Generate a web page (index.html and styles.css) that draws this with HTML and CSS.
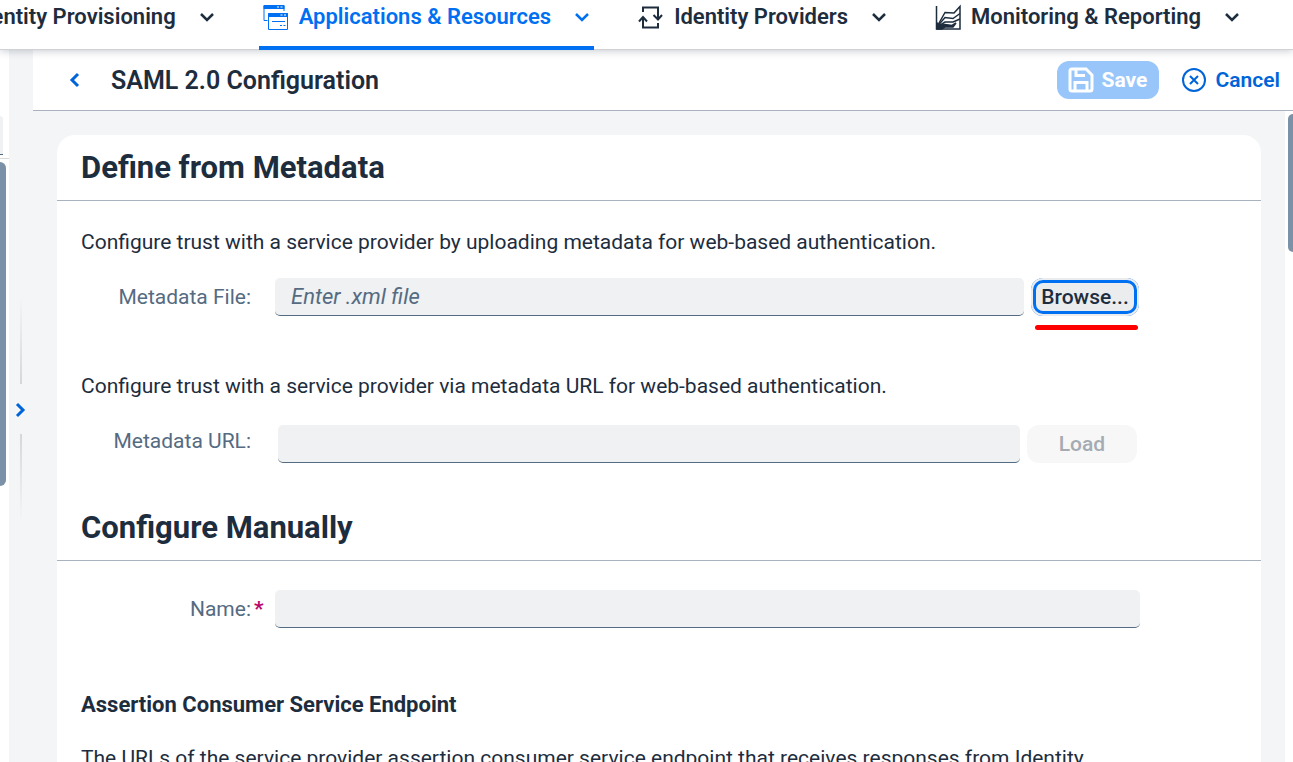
FILE: index.html
```html
<!DOCTYPE html>
<html lang="en">
<head>
<meta charset="utf-8">
<title>SAML 2.0 Configuration</title>
<link rel="stylesheet" href="styles.css">
</head>
<body>
<nav class="topnav">
  <a class="tab" href="#provisioning">
    <span>Identity Provisioning</span>
    <svg class="chevron" viewBox="0 0 16 16"><path d="M2 5l6 6 6-6"/></svg>
  </a>
  <a class="tab tab-active" href="#applications">
    <svg class="tab-icon tab-icon-thin" viewBox="0 0 26 26"><path d="M1 1.500h20v3H1zM1 4v12.500h3.500M21 4v3M5.500 9.500h19v3h-19zM5.500 12v13.500h19V12M9 17.500h13"/><path d="M1 1.500h20v3H1zM5.500 9.500h19v3h-19z" fill="currentColor"/><path class="dots" d="M14 3h2M17.500 3h2M17.500 11h2M21 11h2"/><path d="M17 21.500h2M20.500 21.500h2"/></svg>
    <span>Applications &amp; Resources</span>
    <svg class="chevron" viewBox="0 0 16 16"><path d="M2 5l6 6 6-6"/></svg>
  </a>
  <a class="tab" href="#providers">
    <svg class="tab-icon tab-icon-bold" viewBox="0 0 26 26"><path d="M5 8V3.500h15v11M15.500 11l4.500 4.500 4-4.500M20 19v4.500H5v-10M1 17.500L5 13l4 4.500"/></svg>
    <span>Identity Providers</span>
    <svg class="chevron" viewBox="0 0 16 16"><path d="M2 5l6 6 6-6"/></svg>
  </a>
  <a class="tab" href="#monitoring">
    <svg class="tab-icon" viewBox="0 0 26 26"><path d="M1.500 2v23H25V2.500l-6 6.500-9-.5L3.500 20"/><path d="M3 21.500l7-8 8 1 7-5M3 22.500l7-4.500 8 0 7-3"/><path d="M2 19l2 2.500 6-1 7 1 4-2.500-3 4-8 0-3 2H2z" fill="currentColor"/></svg>
    <span>Monitoring &amp; Reporting</span>
    <svg class="chevron" viewBox="0 0 16 16"><path d="M2 5l6 6 6-6"/></svg>
  </a>
</nav>

<div class="workspace">
  <aside class="list-pane">
    <div class="list-search"></div>
    <div class="list-thumb"></div>
  </aside>
  <div class="splitter">
    <span class="splitter-line"></span>
    <button class="splitter-button" type="button" aria-label="Expand list"><svg class="arrow" viewBox="0 0 16 16"><path d="M4 2l6 6-6 6"/></svg></button>
    <span class="splitter-line splitter-line-end"></span>
  </div>
  <main class="detail">
    <header class="detail-header">
      <button class="back" type="button" aria-label="Back"><svg class="arrow" viewBox="0 0 16 16"><path d="M12 2L6 8l6 6"/></svg></button>
      <h1 class="title">SAML 2.0 Configuration</h1>
      <button class="button save" type="button" disabled>
        <svg class="action-icon" viewBox="0 0 26 26"><path d="M4 2h14l6 6v14a2 2 0 0 1-2 2H4a2 2 0 0 1-2-2V4a2 2 0 0 1 2-2zM8 2v6.500h9M7 24v-8.500h12V24"/></svg>
        <span>Save</span>
      </button>
      <button class="button cancel" type="button">
        <svg class="action-icon" viewBox="0 0 26 26"><circle cx="13" cy="13" r="11"/><path d="M9 9l8 8M17 9l-8 8"/></svg>
        <span>Cancel</span>
      </button>
    </header>
    <div class="detail-body">
      <div class="scroll-area">
        <form class="card">
          <h2 class="section-title">Define from Metadata</h2>
          <section class="section">
            <p class="text">Configure trust with a service provider by uploading metadata for web-based authentication.</p>
            <div class="row">
              <label class="label" for="file">Metadata File:</label>
              <input class="field" id="file" type="text" placeholder="Enter .xml file">
              <span class="browse-wrap"><button class="button browse" type="button">Browse...</button></span>
            </div>
            <p class="text">Configure trust with a service provider via metadata URL for web-based authentication.</p>
            <div class="row row-url">
              <label class="label" for="url">Metadata URL:</label>
              <input class="field" id="url" type="text">
              <button class="button load" type="button" disabled>Load</button>
            </div>
          </section>
          <h2 class="section-title">Configure Manually</h2>
          <section class="section section-manual">
            <div class="row">
              <label class="label label-required" for="name">Name:</label>
              <input class="field" id="name" type="text" required>
            </div>
            <h3 class="subtitle">Assertion Consumer Service Endpoint</h3>
            <p class="text">The URLs of the service provider assertion consumer service endpoint that receives responses from Identity</p>
          </section>
        </form>
      </div>
      <div class="scrollbar"><div class="scroll-thumb"></div></div>
    </div>
  </main>
</div>
</body>
</html>
```
FILE: styles.css
```css
* {
  box-sizing: border-box;
}

body {
  margin: 0;
  height: 100vh;
  overflow: hidden;
  display: flex;
  flex-direction: column;
  background: #f4f5f7;
  color: #1d2d3e;
  font: 21px/30px Roboto, sans-serif;
}

h1, h2, h3, p {
  margin: 0;
}

button, input {
  font: inherit;
  border: 0;
  padding: 0;
}

svg {
  display: block;
  flex: none;
  fill: none;
  stroke: currentColor;
}

/* Top navigation */
.topnav {
  position: relative;
  z-index: 1;
  flex: none;
  display: flex;
  justify-content: flex-end;
  gap: 40px;
  height: 50px;
  padding-right: 49px;
  background: #fff;
  border-bottom: 1px solid #d0d2d5;
  box-shadow: 0 1px 8px rgba(29, 45, 62, 0.25);
  white-space: nowrap;
}

.tab {
  flex: none;
  display: flex;
  align-items: center;
  height: 50px;
  padding: 0 4px 12px;
  border-bottom: 4px solid transparent;
  color: #1d2d3e;
  font-size: 22px;
  font-weight: 600;
  text-decoration: none;
}

.tab-active {
  color: #0070f2;
  border-color: #0070f2;
  border-radius: 3px 3px 0 0;
}

.tab-icon {
  width: 26px;
  height: 26px;
  margin-right: 10px;
  stroke-width: 1.5;
}

.tab-icon-bold {
  stroke-width: 2;
}

.tab-icon-thin {
  stroke-width: 1;
}

.dots {
  stroke: #fff;
}

.chevron {
  width: 16px;
  height: 16px;
  margin-left: 23px;
  stroke-width: 2.5;
}

.arrow {
  width: 16px;
  height: 16px;
  stroke-width: 3;
}

/* Collapsed list and splitter */
.workspace {
  flex: 1;
  min-height: 0;
  display: flex;
}

.list-pane {
  flex: none;
  width: 9px;
  background: #fff;
}

.list-search {
  height: 109px;
  padding-top: 66px;
  border-bottom: 1px solid #d9d9d9;
}

.list-search::before {
  content: "";
  display: block;
  width: 3px;
  height: 38px;
  background: #eff1f2;
  border-bottom: 1px solid #556b82;
  border-radius: 0 4px 0 0;
}

.list-thumb {
  width: 6px;
  height: 324px;
  margin-top: 3px;
  background: #7b91a8;
  border-radius: 0 6px 6px 0;
}

.splitter {
  flex: none;
  width: 24px;
  display: flex;
  flex-direction: column;
  align-items: center;
  padding-top: 246px;
}

.splitter-line {
  width: 2px;
  height: 88px;
  background: linear-gradient(transparent, #d5d7da);
}

.splitter-line-end {
  background: linear-gradient(#d5d7da, transparent);
}

.splitter-button, .back {
  display: flex;
  align-items: center;
  justify-content: center;
  background: none;
  color: #0064d9;
}

.splitter-button {
  width: 24px;
  height: 50px;
  padding-top: 2px;
}

/* Detail page */
.detail {
  flex: 1;
  min-width: 0;
  display: flex;
  flex-direction: column;
}

.detail-header {
  flex: none;
  display: flex;
  align-items: center;
  height: 61px;
  padding: 0 13px 0 24px;
  background: #fff;
  border-bottom: 1px solid #a8b3bf;
}

.back {
  width: 34px;
  height: 38px;
}

.title {
  flex: 1;
  padding: 2px 0 0 20px;
  font-size: 25px;
  font-weight: 600;
}

.button {
  flex: none;
  display: flex;
  align-items: center;
  justify-content: center;
  height: 38px;
  border-radius: 12px;
  font-weight: 500;
  white-space: nowrap;
}

.action-icon {
  width: 26px;
  height: 26px;
  margin-right: 9px;
  stroke-width: 2;
}

.save {
  width: 102px;
  margin-right: 22px;
  background: #99c6fa;
  color: #fff;
  font-weight: 700;
}

.save .action-icon {
  margin-right: 8px;
  stroke-width: 3;
}

.cancel {
  background: none;
  color: #0064d9;
  font-weight: 600;
}

.detail-body {
  flex: 1;
  min-height: 0;
  display: flex;
}

.scroll-area {
  flex: 1;
  min-width: 0;
  padding: 24px 24px 0;
  overflow: hidden;
}

.scrollbar {
  flex: none;
  width: 8px;
  padding: 3px 0 0 3px;
  background: #fff;
}

.scroll-thumb {
  height: 138px;
  background: #7b91a8;
  border-radius: 6px 0 0 6px;
}

/* Form card */
.card {
  background: #fff;
  border-radius: 18px 18px 0 0;
}

.section-title {
  height: 66px;
  padding-left: 24px;
  border-bottom: 1px solid #a8b3bf;
  font-size: 31px;
  font-weight: 700;
  line-height: 66px;
}

.section {
  height: 294px;
  padding: 26px 24px 0;
}

.row {
  display: grid;
  grid-template-columns: 170px minmax(0, 1fr) auto;
  column-gap: 24px;
  height: 38px;
  margin: 21px 97px 55px 0;
}

.row-url {
  column-gap: 27px;
  margin-top: 24px;
  margin-right: 100px;
}

.label {
  height: 38px;
  color: #556b82;
  line-height: 38px;
  text-align: right;
  white-space: nowrap;
}

.row-url .label {
  line-height: 32px;
}

.row-url .label {
  margin-right: 0;
}

.label-required {
  position: relative;
}

.label-required::after {
  content: "*";
  position: absolute;
  left: 100%;
  padding-left: 3px;
  color: #ba066c;
  font-weight: 700;
}

.field {
  width: 100%;
  min-width: 0;
  height: 38px;
  padding: 0 16px;
  background: #eff1f2;
  border-bottom: 1px solid #556b82;
  border-radius: 5px;
  color: #1d2d3e;
  font-size: 22px;
}

.field::placeholder {
  color: #556b82;
  font-style: italic;
  opacity: 1;
}

.browse-wrap {
  position: relative;
  margin: 0 1px 0 -17px;
}

.browse-wrap::after {
  content: "";
  position: absolute;
  top: 47px;
  left: 4px;
  right: 1px;
  height: 5px;
  background: #f00;
  border-radius: 3px;
}

.browse {
  width: 108px;
  background: #eaecee;
  box-shadow: inset 0 0 0 2px #eaecee, inset 0 0 0 5px #0070f2;
  color: #1d2d3e;
}

.load {
  width: 110px;
  margin-left: -20px;
  background: #f7f7f7;
  color: #a5abb2;
}

.section-manual {
  padding-top: 29px;
}

.section-manual .row {
  grid-template-columns: 170px minmax(0, 1fr);
  margin-top: 0;
  margin-bottom: 62px;
}

.subtitle {
  margin-bottom: 23px;
  font-size: 22px;
  font-weight: 700;
}
```
